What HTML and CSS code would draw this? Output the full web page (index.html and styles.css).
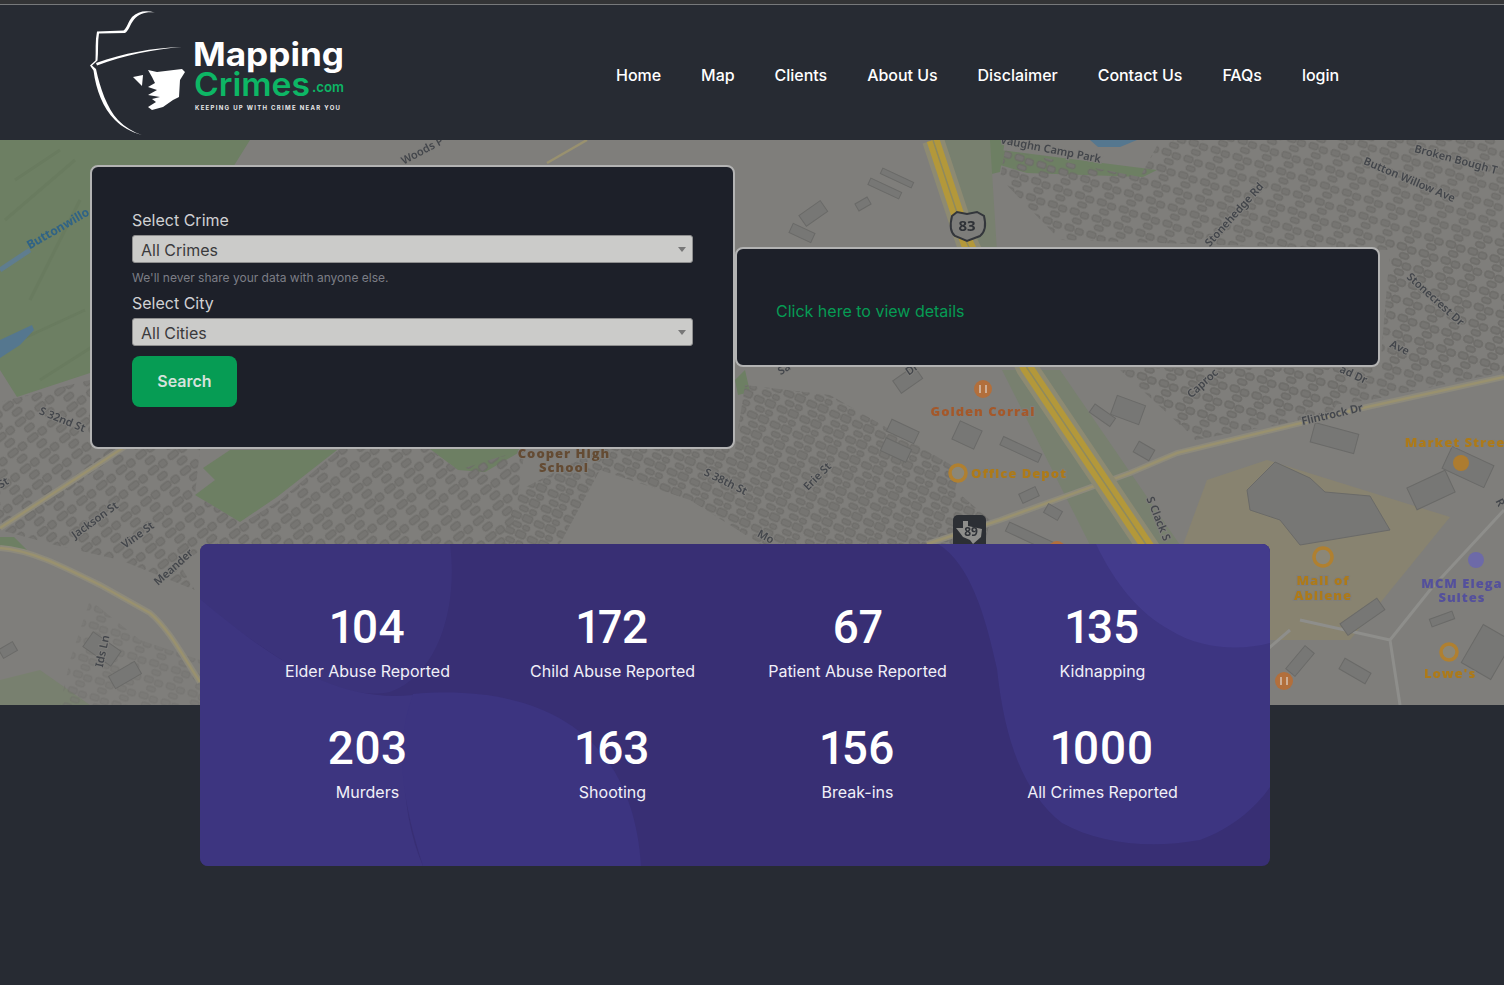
FILE: index.html
```html
<!DOCTYPE html>
<html lang="en">
<head>
  <meta charset="UTF-8" />
  <meta name="viewport" content="width=device-width, initial-scale=1.0"/>
  <title>Mapping Crimes</title>
  <link rel="stylesheet" href="styles.css">
</head>
<body>

  <div class="top-line"></div>

  <!-- Header -->
  <header class="site-header">
    <a class="logo" href="#">
      <svg width="256" height="135" viewBox="90 5 256 135">
        <path class="logo-line" d="M155 12.500C146 11.500 139 13.500 134 19.500C130 24.500 129 30.500 125 33L99 33.500C97.500 42 98.500 52 97.500 60.500L92 65.500L96 69C100 88 107 108 118 120C125 127 133 132 142 135C131 132 122 127 115 120C103 108 96 90 93.500 70.500L90 65.500L95.500 60.500C96 51 95 41 97 31.500L123.500 30.500C127 28 128 22 132 17C138 11 146 10 155 12.500Z"/>
        <path class="logo-line" d="M96 63C124 53 152 48 182 47C152 49.500 125 55 97 65.500Z"/>
        <path class="logo-line" d="M148 70L157 72L182 69L185 72L180 80L179 97L173 100L163 107L152 110L148 107L156 102L152 99L160 97L148 95L157 90L148 87L155 83L152 77Z"/>
        <path class="logo-line" d="M133 77L143 75L142 86Z"/>
        <text class="logo-main" x="193" y="66" textLength="151" lengthAdjust="spacingAndGlyphs">Mapping</text>
        <text class="logo-crimes" x="194" y="96" textLength="116" lengthAdjust="spacingAndGlyphs">Crimes</text>
        <text class="logo-com" x="312" y="92" textLength="32" lengthAdjust="spacingAndGlyphs">.com</text>
        <text class="logo-tag" x="195" y="110" textLength="145">KEEPING UP WITH CRIME NEAR YOU</text>
      </svg>
    </a>
    <nav class="main-nav">
      <a href="#">Home</a>
      <a href="#">Map</a>
      <a href="#">Clients</a>
      <a href="#">About Us</a>
      <a href="#">Disclaimer</a>
      <a href="#">Contact Us</a>
      <a href="#">FAQs</a>
      <a href="#">login</a>
    </nav>
  </header>

  <!-- Map with search -->
  <section class="hero">
    <svg class="map" viewBox="0 140 1504 565" width="1504" height="565">
      <defs>
        <pattern id="housesA" width="25" height="17" patternUnits="userSpaceOnUse" patternTransform="rotate(24)">
          <rect x="1" y="2" width="10" height="6" rx="2" class="house"/>
          <rect x="13" y="1" width="10" height="7" rx="2" class="house"/>
          <rect x="6" y="11" width="9" height="5" rx="2" class="house"/>
          <rect x="17" y="11" width="7" height="5" rx="2" class="house"/>
        </pattern>
        <pattern id="housesB" width="25" height="20" patternUnits="userSpaceOnUse" patternTransform="rotate(-38)">
          <rect x="1" y="2" width="11" height="6" rx="2" class="house"/>
          <rect x="14" y="2" width="8" height="7" rx="2" class="house"/>
          <rect x="5" y="12" width="10" height="6" rx="2" class="house"/>
        </pattern>
        <pattern id="housesC" width="23" height="17" patternUnits="userSpaceOnUse" patternTransform="rotate(18)">
          <rect x="2" y="2" width="9" height="6" rx="2" class="house"/>
          <rect x="13" y="3" width="8" height="6" rx="2" class="house"/>
          <rect x="7" y="11" width="9" height="5" rx="2" class="house"/>
        </pattern>
      </defs>

      <rect class="land" x="0" y="140" width="1504" height="565"/>

      <!-- parks and water -->
      <path class="park" d="M0 140H250L150 300L90 373L17 397L0 370Z"/>
      <path class="park-dark" d="M15 180L60 150M5 220L75 160M30 300L80 200M20 340L85 310M40 380L95 345" />
      <path class="water" d="M0 340L32 325L34 330L20 345L0 358Z"/>
      <path class="water-line" d="M0 270L30 250"/>
      <path class="park" d="M230 450H337L277 497L240 522L195 495L215 480L203 468Z"/>
      <path class="park" d="M430 449H525L485 472L458 470Z"/>
      <path class="park" d="M0 537L14 537L27 550L0 549Z"/>
      <path class="park" d="M1000 150L1157 170L1143 177L1027 173L1000 165Z"/>
      <path class="water" d="M1090 140H1137L1120 147L1098 147Z"/>
      <path class="park" d="M953 140H1005L1000 172L975 178Z"/>
      <path class="park" d="M735 380L745 370L750 392L738 395Z"/>
      <path class="verge" d="M0 680L40 670L90 705H0Z"/>

      <!-- commercial ground -->
      <path class="ground" d="M1183 545L1207 480L1267 460L1450 517L1350 640L1270 640Z"/>
      <path class="verge" d="M1002 370H1060L1180 545H1090Z"/>
      <path class="verge" d="M940 140H990L1000 300H980Z"/>

      <!-- housing blocks -->
      <path fill="url(#housesA)" d="M745 385L830 395L960 470L955 490L990 520L985 544H760L690 500L600 470L560 544H500L520 490L600 449L735 449Z"/>
      <path fill="url(#housesC)" d="M1005 150L1140 177L1160 140H1504V372L1370 400L1180 425L1120 370L1380 368L1390 250L1060 240L1000 178Z"/>
      <path fill="url(#housesC)" d="M1390 240H1504V370H1390Z"/>
      <path fill="url(#housesC)" d="M1130 368H1360L1330 415L1195 440Z"/>
      <path fill="url(#housesB)" d="M0 402L90 380L140 449H200L195 495L240 522L180 565L195 590L120 560L55 545L0 530Z"/>
      <path fill="url(#housesB)" d="M280 500L340 449H430L458 470L525 449L510 544H200L240 525Z"/>
      <path fill="url(#housesC)" d="M90 600L140 640L200 660V705H60L70 660Z" opacity=".5"/>

      <!-- roads -->
      <path class="road-halo" d="M0 528L43 500L100 463L150 430"/>
      <path class="road" d="M0 528L43 500L100 463L150 430"/>
      <path class="road-halo" d="M0 548C30 550 60 565 100 585L150 613C170 630 185 660 200 682"/>
      <path class="road" d="M0 548C30 550 60 565 100 585L150 613C170 630 185 660 200 682"/>
      <path class="road-halo" d="M927 544L1000 520L1130 473L1177 453L1367 407L1504 377"/>
      <path class="road" d="M927 544L1000 520L1130 473L1177 453L1367 407L1504 377"/>
      <path class="road" d="M547 163L587 140"/>
      <path class="road-thin" d="M1300 620L1390 640L1400 705M1390 640L1430 590L1504 510M1220 690L1290 630"/>
      <path class="highway-edge" d="M933 140L967 243L1027 368L1143 540L1160 565"/>
      <path class="highway" d="M933 140L967 243L1027 368L1143 540L1160 565"/>
      <path class="highway-mid" d="M933 140L967 243L1027 368L1143 540L1160 565"/>

      <!-- bigger buildings -->
      <g class="block">
        <rect x="800" y="207" width="26" height="13" transform="rotate(-35 813 213)"/>
        <rect x="856" y="200" width="14" height="8" transform="rotate(-30 863 204)"/>
        <rect x="880" y="175" width="34" height="6" transform="rotate(25 897 178)"/>
        <rect x="868" y="185" width="34" height="7" transform="rotate(25 885 188)"/>
        <rect x="790" y="228" width="24" height="10" transform="rotate(25 802 233)"/>
        <rect x="895" y="372" width="26" height="15" transform="rotate(-35 908 380)"/>
        <rect x="888" y="425" width="30" height="13" transform="rotate(25 903 431)"/>
        <rect x="882" y="443" width="28" height="14" transform="rotate(25 896 450)"/>
        <rect x="955" y="425" width="24" height="20" transform="rotate(25 967 435)"/>
        <rect x="1000" y="445" width="42" height="9" transform="rotate(25 1021 449)"/>
        <rect x="1020" y="490" width="18" height="10" transform="rotate(-25 1029 495)"/>
        <rect x="1045" y="507" width="16" height="10" transform="rotate(30 1053 512)"/>
        <rect x="1005" y="533" width="55" height="10" transform="rotate(25 1032 538)"/>
        <rect x="1113" y="400" width="30" height="20" transform="rotate(20 1128 410)"/>
        <rect x="1090" y="410" width="25" height="10" transform="rotate(35 1102 415)"/>
        <rect x="1135" y="445" width="18" height="12" transform="rotate(30 1144 451)"/>
        <rect x="1312" y="428" width="45" height="20" transform="rotate(15 1334 438)"/>
        <rect x="1445" y="455" width="46" height="24" transform="rotate(25 1468 467)"/>
        <rect x="1410" y="478" width="42" height="24" transform="rotate(-25 1431 490)"/>
        <path d="M1247 490L1275 462L1310 478L1325 492L1370 496L1390 530L1300 545L1280 520L1250 510Z"/>
        <rect x="1340" y="610" width="45" height="14" transform="rotate(-35 1362 617)"/>
        <rect x="1285" y="655" width="30" height="12" transform="rotate(-50 1300 661)"/>
        <rect x="1340" y="665" width="30" height="12" transform="rotate(30 1355 671)"/>
        <rect x="1470" y="630" width="34" height="44" transform="rotate(30 1487 652)"/>
        <rect x="1430" y="615" width="24" height="8" transform="rotate(-20 1442 619)"/>
        <rect x="85" y="640" width="34" height="18" transform="rotate(35 102 649)"/>
        <rect x="110" y="668" width="30" height="14" transform="rotate(-30 125 675)"/>
        <rect x="0" y="645" width="16" height="10" transform="rotate(-30 8 650)"/>
      </g>

      <!-- street names -->
      <g class="street">
        <text transform="translate(424 154) rotate(-28)">Woods P</text>
        <text transform="translate(1050 153) rotate(11)">Vaughn Camp Park</text>
        <text transform="translate(1455 163) rotate(15)">Broken Bough T</text>
        <text transform="translate(1408 183) rotate(23)">Button Willow Ave</text>
        <text transform="translate(1237 217) rotate(-48)">Stonehedge Rd</text>
        <text transform="translate(1433 302) rotate(42)">Stonecrest Dr</text>
        <text transform="translate(1398 351) rotate(25)">Ave</text>
        <text transform="translate(1205 386) rotate(-42)">Caproc</text>
        <text transform="translate(1352 378) rotate(25)">ad Dr</text>
        <text transform="translate(1333 418) rotate(-13)">Flintrock Dr</text>
        <text transform="translate(1155 520) rotate(68)">S Clack S</text>
        <text transform="translate(724 485) rotate(26)">S 38th St</text>
        <text transform="translate(820 479) rotate(-45)">Erie St</text>
        <text transform="translate(764 540) rotate(28)">Mo</text>
        <text transform="translate(61 423) rotate(22)">S 32nd St</text>
        <text transform="translate(5 486) rotate(-30)">St</text>
        <text transform="translate(97 523) rotate(-36)">Jackson St</text>
        <text transform="translate(140 538) rotate(-36)">Vine St</text>
        <text transform="translate(176 570) rotate(-42)">Meander</text>
        <text transform="translate(106 652) rotate(-78)">Ids Ln</text>
        <text transform="translate(1497 504) rotate(62)">R</text>
        <text transform="translate(786 372) rotate(-30)">Sa</text>
        <text transform="translate(914 372) rotate(-35)">Dr</text>
      </g>
      <text class="water-name" transform="translate(60 232) rotate(-30)">Buttonwillo</text>

      <!-- places -->
      <g class="poi-brown">
        <text x="564" y="458">Cooper High</text>
        <text x="564" y="472">School</text>
      </g>
      <g class="poi-orange">
        <text x="983" y="416">Golden Corral</text>
      </g>
      <g class="poi-amber">
        <text x="1019" y="478">Office Depot</text>
        <text x="1455" y="447">Market Stree</text>
        <text x="1323" y="585">Mall of</text>
        <text x="1323" y="600">Abilene</text>
        <text x="1450" y="678">Lowe's</text>
      </g>
      <g class="poi-purple">
        <text x="1462" y="588">MCM Elega</text>
        <text x="1462" y="602">Suites</text>
      </g>
      <circle class="pin-orange" cx="983" cy="389" r="9"/>
      <circle class="pin-orange" cx="1284" cy="681" r="9"/>
      <path class="pin-mark" d="M980 385V393M986 385V393M1281 677V685M1287 677V685"/>
      <circle class="pin-amber" cx="1461" cy="463" r="8"/>
      <circle class="pin-ring" cx="958" cy="473" r="8"/>
      <circle class="pin-ring" cx="1323" cy="557" r="9"/>
      <circle class="pin-ring" cx="1449" cy="652" r="8"/>
      <circle class="pin-purple" cx="1476" cy="560" r="8"/>
      <circle class="pin-orange" cx="1057" cy="549" r="8"/>

      <!-- highway shields -->
      <path class="shield" d="M952 216L957 212L967 214L977 212L984 216C986 224 985 232 980 236L967 241L955 236C950 232 950 224 952 216Z"/>
      <text class="shield-num" x="967" y="231">83</text>
      <rect class="texas" x="953" y="515" width="33" height="36" rx="5"/>
      <path class="texas-shape" d="M956 528H963V521H968V526L982 529L981 537L973 544L970 540L963 537L960 533Z"/>
      <text class="shield-num small" x="971" y="536">89</text>
    </svg>

    <div class="panels">
      <form class="panel search-panel">
        <label class="field-label" for="crime">Select Crime</label>
        <div class="select-wrap">
          <select id="crime">
            <option>All Crimes</option>
          </select>
        </div>
        <small class="field-hint">We'll never share your data with anyone else.</small>
        <label class="field-label" for="city">Select City</label>
        <div class="select-wrap">
          <select id="city">
            <option>All Cities</option>
          </select>
        </div>
        <button type="button" class="search-btn">Search</button>
      </form>

      <div class="panel details-panel">
        <a href="#">Click here to view details</a>
      </div>
    </div>
  </section>

  <!-- Crime counts -->
  <section class="stats">
    <svg class="stats-bg" viewBox="0 0 1070 322" width="1070" height="322" preserveAspectRatio="none">
      <path fill="#3b337b" d="M0 0H250C258 60 240 130 190 148C130 160 60 100 0 60Z"/>
      <path fill="#3d3580" d="M0 55C60 105 130 160 213 151C200 200 200 270 223 322H0Z"/>
      <path fill="#3c3480" d="M213 150C330 140 432 180 441 322H223C200 250 195 200 213 150Z"/>
      <path fill="#3d3581" d="M738 0C770 20 785 70 797 125C805 200 825 250 862 279C900 300 950 305 1000 296C1030 285 1055 265 1070 243V0Z"/>
      <path fill="#433b8c" d="M896 0C915 40 940 70 970 86C1000 105 1040 107 1070 99V0Z"/>
    </svg>
    <div class="stats-grid">
      <div class="stat"><div class="stat-num">104</div><div class="stat-name">Elder Abuse Reported</div></div>
      <div class="stat"><div class="stat-num">172</div><div class="stat-name">Child Abuse Reported</div></div>
      <div class="stat"><div class="stat-num">67</div><div class="stat-name">Patient Abuse Reported</div></div>
      <div class="stat"><div class="stat-num">135</div><div class="stat-name">Kidnapping</div></div>
      <div class="stat"><div class="stat-num">203</div><div class="stat-name">Murders</div></div>
      <div class="stat"><div class="stat-num">163</div><div class="stat-name">Shooting</div></div>
      <div class="stat"><div class="stat-num">156</div><div class="stat-name">Break-ins</div></div>
      <div class="stat"><div class="stat-num">1000</div><div class="stat-name">All Crimes Reported</div></div>
    </div>
  </section>

</body>
</html>
```

FILE: styles.css
```css
:root {
  --page-bg: #272b33;
  --panel-bg: #1d2029;
  --green: #069c54;
}

* {
  box-sizing: border-box;
}

body {
  font-family: Inter, "Liberation Sans", sans-serif;
  background-color: var(--page-bg);
  margin: 0;
  padding: 0;
  height: 985px;
  overflow: hidden;
}

.top-line {
  height: 5px;
  background: #333436;
  border-bottom: 1px solid #77797b;
}

/* HEADER */
.site-header {
  display: flex;
  height: 135px;
  padding-left: 90px;
}

.logo {
  display: block;
  width: 256px;
  height: 135px;
}

.logo svg {
  display: block;
}

.logo-line {
  fill: #fff;
}

.logo-main {
  font-size: 32px;
  font-weight: 700;
  fill: #fff;
}

.logo-crimes {
  font-size: 33px;
  font-weight: 600;
  fill: #0db665;
}

.logo-com {
  font-size: 14px;
  font-weight: 600;
  fill: #0db665;
}

.logo-tag {
  font-size: 6px;
  font-weight: 700;
  fill: #e8e8e8;
}

.main-nav {
  display: flex;
  align-items: center;
  gap: 40px;
  margin-left: 270px;
  padding-top: 5px;
}

.main-nav a {
  color: #fff;
  font-size: 16px;
  font-weight: 500;
  letter-spacing: -0.03px;
  text-decoration: none;
}

/* MAP */
.hero {
  position: relative;
  height: 565px;
  padding: 25px 0 0 90px;
  overflow: hidden;
}

.map {
  position: absolute;
  top: 0;
  left: 0;
  filter: blur(0.4px);
}

.land { fill: #7f7e7b; }
.park { fill: #6d7f63; }
.park-dark { fill: none; stroke: #697b5f; stroke-width: 3; }
.water { fill: #55778f; }
.water-line { stroke: #5f7d8f; stroke-width: 5; }
.verge { fill: #78806f; }
.ground { fill: #888370; }

.house {
  fill: #767572;
  stroke: #6a6966;
  stroke-width: 1;
}

.block {
  fill: #777775;
  stroke: #6a6a68;
  stroke-width: 1;
}

.road, .road-halo, .road-thin, .highway, .highway-edge, .highway-mid {
  fill: none;
}

.road-halo { stroke: #8d8a7c; stroke-width: 6; }
.road { stroke: #99916f; stroke-width: 2.5; }
.road-thin { stroke: #8e8e8b; stroke-width: 3; }
.highway-edge { stroke: #8d8a72; stroke-width: 22; }
.highway { stroke: #b3983a; stroke-width: 13; }
.highway-mid { stroke: #8f8a5e; stroke-width: 1.5; }

.street text {
  font-family: "Noto Sans", sans-serif;
  font-size: 11px;
  font-weight: 600;
  text-anchor: middle;
  fill: #43464b;
  stroke: #7f7e7b;
  stroke-width: 2px;
  paint-order: stroke;
}

.water-name {
  font-family: "Noto Sans", sans-serif;
  font-size: 12px;
  font-weight: 700;
  text-anchor: middle;
  fill: #2f6386;
}

.poi-brown text, .poi-orange text, .poi-amber text, .poi-purple text {
  font-family: "Open Sans", sans-serif;
  font-size: 13px;
  font-weight: 800;
  letter-spacing: 1px;
  text-anchor: middle;
  stroke: #7f7e7b;
  stroke-width: 2px;
  paint-order: stroke;
}

.poi-brown text { fill: #644b33; }
.poi-orange text { fill: #a4582a; }
.poi-amber text { fill: #ad7a18; }
.poi-purple text { fill: #54509c; }

.pin-orange { fill: #b26f3c; }
.pin-amber { fill: #ad7c30; }
.pin-purple { fill: #6d6aa8; }
.pin-ring { fill: #8b8778; stroke: #b08030; stroke-width: 3.5; }
.pin-mark { fill: none; stroke: #d6c4b4; stroke-width: 1.5; }

.shield { fill: #7d7d7a; stroke: #33363b; stroke-width: 2; }
.shield-num {
  font-family: "Noto Sans", sans-serif;
  font-size: 15px;
  font-weight: 700;
  text-anchor: middle;
  fill: #2f3237;
}
.shield-num.small { font-size: 12px; }
.texas { fill: #2c2f34; }
.texas-shape { fill: #8e8e8b; }

/* PANELS */
.panels {
  position: relative;
  display: flex;
  align-items: center;
}

.panel {
  width: 645px;
  background: var(--panel-bg);
  border: 2px solid #b3b3b3;
  border-radius: 8px;
}

.search-panel {
  height: 284px;
  padding: 41px 40px 0;
}

.field-label {
  display: block;
  color: #d0d1d3;
  font-size: 16px;
  line-height: 24px;
  margin-bottom: 3px;
}

.select-wrap {
  position: relative;
  width: 561px;
}

.select-wrap::after {
  content: "";
  position: absolute;
  top: 12px;
  right: 7px;
  border-left: 4px solid transparent;
  border-right: 4px solid transparent;
  border-top: 5px solid #777;
}

.select-wrap select {
  display: block;
  width: 100%;
  height: 28px;
  padding: 2px 8px 0;
  border: 1px solid #8e8e8e;
  border-radius: 3px;
  background: #cbcbc9;
  color: #3a3a3c;
  font-family: inherit;
  font-size: 16px;
  -webkit-appearance: none;
  appearance: none;
}

.field-hint {
  display: block;
  color: #7c7e86;
  font-size: 12px;
  line-height: 18px;
  margin: 6px 0 4px;
}

.search-btn {
  display: block;
  width: 105px;
  height: 51px;
  margin-top: 10px;
  padding: 0 0 2px;
  border: none;
  border-radius: 8px;
  background: var(--green);
  color: #d5e2dc;
  font-family: inherit;
  font-size: 16px;
  font-weight: 600;
}

.details-panel {
  height: 120px;
  padding: 44px 39px 36px;
  line-height: 36px;
}

.details-panel a {
  color: var(--green);
  font-size: 16px;
  text-decoration: none;
}

/* STATS */
.stats {
  position: relative;
  width: 1070px;
  height: 322px;
  margin: -161px 0 0 200px;
  background: #382f74;
  border-radius: 8px;
  overflow: hidden;
}

.stats-bg {
  position: absolute;
  top: 0;
  left: 0;
}

.stats-grid {
  position: relative;
  display: grid;
  grid-template-columns: repeat(4, 245px);
  row-gap: 38px;
  padding: 56px 45px 0;
  text-align: center;
  color: #fff;
}

.stat-num {
  font-family: Roboto, sans-serif;
  font-size: 46px;
  font-weight: 500;
  line-height: 54px;
  margin-bottom: 5px;
  font-variant-numeric: proportional-nums;
}

.stat-name {
  font-size: 16px;
  line-height: 24px;
  color: #f1f0f8;
}
```
